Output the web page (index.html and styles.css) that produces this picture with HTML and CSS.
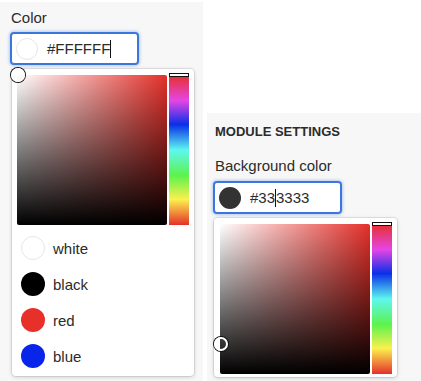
FILE: index.html
```html
<!DOCTYPE html>
<html lang="en">
<head>
  <meta charset="UTF-8" />
  <title>Color Picker</title>
  <link rel="stylesheet" href="styles.css">
</head>
<body>
  <div class="page">
    <div class="panel panel-left">
      <div class="field-label">Color</div>
      <div class="color-input">
        <span class="dot dot-white"></span>
        <span class="value">#FFFFFF<span class="caret"></span></span>
      </div>
      <div class="popover popover-left">
        <div class="picker">
          <div class="sat">
            <span class="sat-handle" style="left: 0%; top: 0%;"></span>
          </div>
          <div class="hue"><span class="hue-handle"></span></div>
        </div>
        <ul class="swatches">
          <li><span class="dot dot-white"></span>white</li>
          <li><span class="dot dot-black"></span>black</li>
          <li><span class="dot dot-red"></span>red</li>
          <li><span class="dot dot-blue"></span>blue</li>
        </ul>
      </div>
    </div>

    <div class="panel panel-right">
      <div class="section-title">MODULE SETTINGS</div>
      <div class="field-label">Background color</div>
      <div class="color-input">
        <span class="dot dot-dark"></span>
        <span class="value">#33<span class="caret"></span>3333</span>
      </div>
      <div class="popover">
        <div class="picker">
          <div class="sat">
            <span class="sat-handle" style="left: 0%; top: 80%;"></span>
          </div>
          <div class="hue"><span class="hue-handle"></span></div>
        </div>
      </div>
    </div>
  </div>
</body>
</html>
```

FILE: styles.css
```css
body {
  margin: 0;
  background: #fff;
  font-family: "Liberation Sans", Arial, sans-serif;
  color: #2b2b2b;
}
.page {
  display: flex;
  align-items: flex-start;
}
.panel {
  background: #f7f7f7;
  box-sizing: border-box;
}
.panel-left {
  width: 203px;
  height: 379px;
  margin-top: 2px;
  padding: 7px 11px 0 11px;
}
.panel-right {
  width: 214px;
  height: 268px;
  margin-top: 113px;
  margin-left: 4px;
  padding: 11px 8px 0 7px;
}
.section-title {
  font-size: 13px;
  font-weight: bold;
  line-height: 16px;
  padding-left: 1px;
  margin-bottom: 17px;
}
.field-label {
  font-size: 15px;
  line-height: 18px;
  margin-bottom: 6px;
}
.panel-right .field-label {
  padding-left: 1px;
  margin-bottom: 7px;
}
.color-input {
  width: 127px;
  height: 31px;
  box-sizing: border-box;
  display: flex;
  align-items: center;
  gap: 9px;
  padding-left: 4px;
  background: #fff;
  border: 1px solid #3b76dd;
  border-radius: 3px;
  box-shadow: 0 0 0 1px #3b76dd, 0 0 3px 2px rgba(59, 118, 221, 0.35);
}
.color-input .dot {
  width: 22px;
  height: 22px;
}
.value {
  font-size: 15px;
  display: flex;
  align-items: center;
}
.caret {
  display: inline-block;
  width: 1px;
  height: 18px;
  background: #111;
}
.dot {
  display: inline-block;
  flex: none;
  border-radius: 50%;
  box-sizing: border-box;
}
.dot-white { background: #fff; border: 1px solid #e6e6e6; }
.dot-black { background: #000; }
.dot-red { background: #e8302b; }
.dot-blue { background: #0a25ea; }
.dot-dark { background: #333; }
.popover {
  width: 183px;
  box-sizing: border-box;
  margin-top: 5px;
  padding: 6px 5px 3px 6px;
  background: #fff;
  border-radius: 4px;
  box-shadow: 0 0 0 1px rgba(0, 0, 0, 0.07), 0 1px 4px rgba(0, 0, 0, 0.18);
}
.popover-left {
  width: 182px;
  margin-left: 1px;
  padding-left: 5px;
  padding-bottom: 2px;
}
.picker {
  display: flex;
  gap: 2px;
}
.sat {
  position: relative;
  width: 150px;
  height: 150px;
  border-radius: 2px;
  background:
    linear-gradient(to top, #000, rgba(0, 0, 0, 0)),
    linear-gradient(to right, #fff, rgba(255, 255, 255, 0)),
    #e5302a;
}
.sat-handle {
  position: absolute;
  width: 14px;
  height: 14px;
  margin: -7px 0 0 -6px;
  box-sizing: border-box;
  border-radius: 50%;
  border: 2px solid #fff;
  box-shadow: 0 0 0 1px #111;
}
.hue {
  position: relative;
  width: 20px;
  height: 150px;
  background: linear-gradient(to bottom,
    #e5302a 0%, #e645e6 17%, #0a2fe8 33%, #5ef7ef 50%,
    #5cf34c 67%, #fbf04e 83%, #e5302a 100%);
}
.hue-handle {
  position: absolute;
  left: 0;
  top: -2px;
  width: 20px;
  height: 4px;
  box-sizing: border-box;
  background: #fff;
  border: 1px solid #111;
}
.swatches {
  list-style: none;
  margin: 5px 0 0 0;
  padding: 0 0 0 4px;
}
.swatches li {
  height: 36px;
  display: flex;
  align-items: center;
  gap: 8px;
  font-size: 15px;
}
.swatches .dot {
  width: 24px;
  height: 24px;
}
```
